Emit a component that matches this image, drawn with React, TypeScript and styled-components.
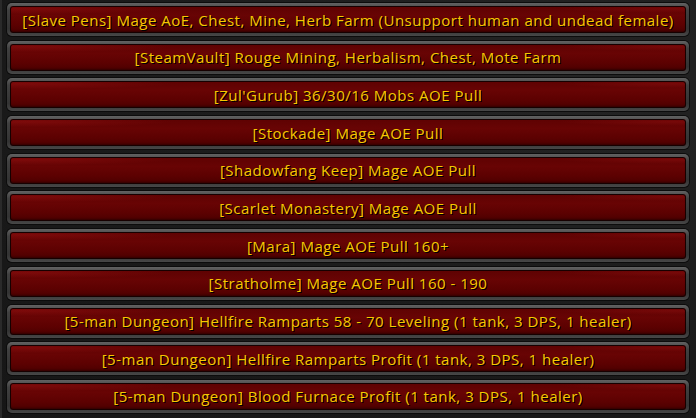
import React from 'react';
import styled, { createGlobalStyle } from 'styled-components';

const Global = createGlobalStyle`
  html, body {
    margin: 0;
    padding: 0;
    background: #1a1a1a;
  }
  body {
    width: 696px;
    height: 418px;
    overflow: hidden;
  }
`;

const Panel = styled.div`
  box-sizing: border-box;
  width: 696px;
  height: 418px;
  padding: 3px 7px 0 5px;
  display: flex;
  flex-direction: column;
  gap: 4.7px;
  background: radial-gradient(ellipse at 80% 20%, #242424 0%, #1a1a1a 60%, #161616 100%);
  border-left: 2px solid #2a2a2a;
`;

const Frame = styled.div`
  box-sizing: border-box;
  height: 33px;
  padding: 3px;
  border-radius: 5px;
  background: linear-gradient(#626262 0%, #404040 22%, #333 78%, #474747 100%);
  box-shadow: 0 0 0 1px #0c0c0c;
  display: flex;
`;

const Face = styled.div`
  flex: 1;
  border-radius: 3px;
  display: flex;
  align-items: center;
  justify-content: center;
  background:
    radial-gradient(ellipse at 2% 10%, rgba(160, 20, 20, 0.45) 0%, rgba(160, 20, 20, 0) 16%),
    radial-gradient(ellipse at 98% 10%, rgba(160, 20, 20, 0.35) 0%, rgba(160, 20, 20, 0) 12%),
    linear-gradient(#5e0202 0%, #680404 35%, #5c0101 70%, #4a0000 100%);
  box-shadow: inset 0 0 0 1px #160000, inset 0 -2px 2px rgba(0, 0, 0, 0.35);
`;

const Label = styled.span`
  font-family: "Open Sans", "Noto Sans", sans-serif;
  font-size: 15px;
  font-weight: 500;
  color: #f7c800;
  text-shadow: 1px 1px 0 #000;
  letter-spacing: 0.5px;
  white-space: nowrap;
`;

const items = [
  '[Slave Pens] Mage AoE, Chest, Mine, Herb Farm (Unsupport human and undead female)',
  '[SteamVault] Rouge Mining, Herbalism, Chest, Mote Farm',
  "[Zul'Gurub] 36/30/16 Mobs AOE Pull",
  '[Stockade] Mage AOE Pull',
  '[Shadowfang Keep] Mage AOE Pull',
  '[Scarlet Monastery] Mage AOE Pull',
  '[Mara] Mage AOE Pull 160+',
  '[Stratholme] Mage AOE Pull 160 - 190',
  '[5-man Dungeon] Hellfire Ramparts 58 - 70 Leveling (1 tank, 3 DPS, 1 healer)',
  '[5-man Dungeon] Hellfire Ramparts Profit (1 tank, 3 DPS, 1 healer)',
  '[5-man Dungeon] Blood Furnace Profit (1 tank, 3 DPS, 1 healer)',
];

export default function App() {
  return (
    <>
      <Global />
      <Panel>
        {items.map((t) => (
          <Frame key={t}>
            <Face>
              <Label>{t}</Label>
            </Face>
          </Frame>
        ))}
      </Panel>
    </>
  );
}
